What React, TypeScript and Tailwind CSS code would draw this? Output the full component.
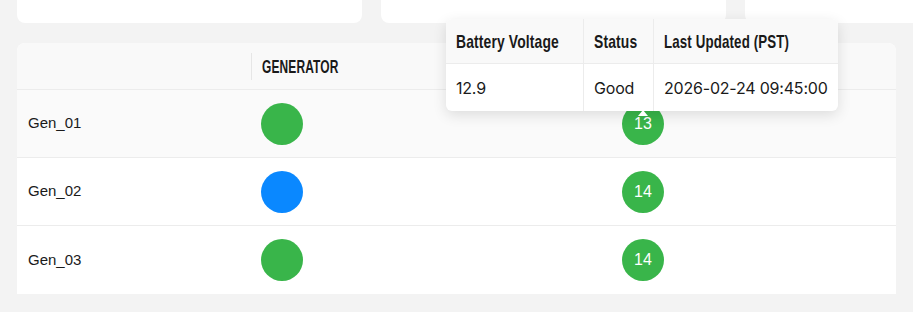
import React from 'react';

const rows = [
  { name: 'Gen_01', color: 'bg-[#39b54a]', count: 13, hover: true },
  { name: 'Gen_02', color: 'bg-[#0a88ff]', count: 14, hover: false },
  { name: 'Gen_03', color: 'bg-[#39b54a]', count: 14, hover: false },
];

// condensed heading look (no narrow font installed, so squeeze Liberation Sans Bold)
function Head({ children, squeeze }: { children: React.ReactNode; squeeze: string }) {
  return (
    <span
      className={`inline-block origin-left whitespace-nowrap font-['Liberation_Sans',sans-serif] text-[19px] font-bold leading-none tracking-[0.2px] text-[#1a1a1a] ${squeeze}`}
    >
      {children}
    </span>
  );
}

export default function App() {
  return (
    <div className="relative h-[312px] w-[913px] overflow-hidden bg-[#f3f3f3] font-['Liberation_Sans',sans-serif] text-[#1a1a1a]">
      {/* summary cards, scrolled up */}
      <div className="flex gap-[19px] pl-[17px]">
        <div className="h-[23px] w-[345px] shrink-0 rounded-b-lg bg-white" />
        <div className="h-[23px] w-[345px] shrink-0 rounded-b-lg bg-white" />
        <div className="h-[23px] w-[345px] shrink-0 rounded-b-lg bg-white" />
      </div>

      {/* generator table */}
      <div className="ml-[17px] mt-[20px] w-[879px] overflow-hidden rounded-t-lg bg-white">
        <div className="flex h-[47px] items-center border-b border-[#ececec] bg-[#f9f9f9]">
          <div className="w-[234px]" />
          <div className="flex h-[27px] w-[360px] items-center border-l border-[#e6e6e6] pl-[10px]">
            <Head squeeze="scale-x-[0.63]">GENERATOR</Head>
          </div>
          <div className="flex-1" />
        </div>
        {rows.map((r, i) => (
          <div
            key={r.name}
            className={`flex h-[68px] items-center ${i < rows.length - 1 ? 'border-b border-[#ececec]' : ''} ${r.hover ? 'bg-[#fafafa]' : 'bg-white'}`}
          >
            <div className="w-[234px] pl-[11px] text-[15px]">{r.name}</div>
            <div className="w-[360px] pl-[10px]">
              <div className={`h-[42px] w-[42px] rounded-full ${r.color}`} />
            </div>
            <div className="pl-[11px]">
              <div className="flex h-[42px] w-[42px] items-center justify-center rounded-full bg-[#39b54a] text-[16px] text-white">
                {r.count}
              </div>
            </div>
          </div>
        ))}
      </div>

      {/* hover tooltip */}
      <div className="absolute left-[446px] top-[19px] w-[392px] rounded-md bg-white shadow-[0_4px_14px_rgba(0,0,0,0.12)]">
        <div className="overflow-hidden rounded-md">
          <div className="flex h-[45px] items-center border-b border-[#ececec] bg-[#f9f9f9]">
            <div className="flex h-full w-[138px] items-center border-r border-[#ececec] pl-[10px]">
              <Head squeeze="scale-x-[0.73]">Battery Voltage</Head>
            </div>
            <div className="flex h-full w-[70px] items-center border-r border-[#ececec] pl-[10px]">
              <Head squeeze="scale-x-[0.73]">Status</Head>
            </div>
            <div className="flex h-full flex-1 items-center pl-[10px]">
              <Head squeeze="scale-x-[0.70]">Last Updated (PST)</Head>
            </div>
          </div>
          <div className="flex h-[47px] items-center font-['Inter',sans-serif] text-[16px] tracking-[-0.2px]">
            <div className="flex h-full w-[138px] items-center border-r border-[#ececec] pl-[10px]">12.9</div>
            <div className="flex h-full w-[70px] items-center border-r border-[#ececec] pl-[10px]">Good</div>
            <div className="flex h-full flex-1 items-center pl-[10px]">2026-02-24 09:45:00</div>
          </div>
        </div>
        <div className="absolute left-[192px] top-full h-0 w-0 -translate-y-[1px] border-x-[5px] border-b-[6px] border-x-transparent border-b-white" />
      </div>
    </div>
  );
}
